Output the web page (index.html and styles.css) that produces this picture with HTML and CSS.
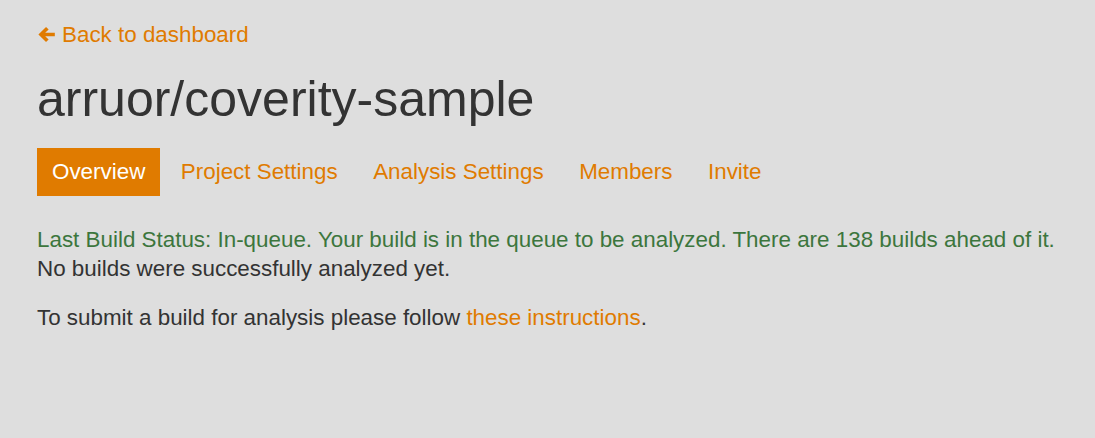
FILE: index.html
```html
<!DOCTYPE html>
<html>
<head>
<meta charset="utf-8">
<link rel="stylesheet" href="styles.css">
</head>
<body>
<div class="page">
  <a class="back" href="#"><svg class="arrow" viewBox="0 0 16 16" width="19" height="19"><path d="M1.2 8 L7.6 1.6 L9.8 3.8 L6.9 6.5 H15 V9.5 H6.9 L9.8 12.2 L7.6 14.4 Z" fill="currentColor"/></svg>Back to dashboard</a>
  <h1 class="title">arruor/coverity-sample</h1>
  <ul class="nav">
    <li class="nav-item active"><a href="#">Overview</a></li>
    <li class="nav-item"><a href="#">Project Settings</a></li>
    <li class="nav-item"><a href="#">Analysis Settings</a></li>
    <li class="nav-item"><a href="#">Members</a></li>
    <li class="nav-item"><a href="#">Invite</a></li>
  </ul>
  <div class="status">
    <p class="success">Last Build Status: In-queue. Your build is in the queue to be analyzed. There are 138 builds ahead of it.</p>
    <p class="plain">No builds were successfully analyzed yet.</p>
  </div>
  <p class="plain submit">To submit a build for analysis please follow <a href="#">these instructions</a>.</p>
</div>
</body>
</html>
```
FILE: styles.css
```css
html, body {
  margin: 0;
  padding: 0;
  background: #dedede;
}
body {
  font-family: "Liberation Sans", Arial, sans-serif;
  font-size: 22.4px;
  line-height: 29px;
  color: #333;
}
a {
  color: #e07b00;
  text-decoration: none;
}
.page {
  padding: 20px 37px 0 37px;
}
.back {
  display: inline-flex;
  align-items: center;
  gap: 6px;
}
.arrow {
  display: block;
}
.title {
  font-size: 50px;
  font-weight: normal;
  line-height: 56px;
  margin: 20px 0 21px;
}
.nav {
  list-style: none;
  margin: 0;
  padding: 0;
  display: flex;
  gap: 5.5px;
}
.nav-item a {
  display: block;
  padding: 10px 15px;
  line-height: 28px;
}
.nav-item.active a {
  background: #e07b00;
  color: #fff;
}
.status {
  margin-top: 29px;
}
.status p {
  margin: 0;
}
.success {
  color: #3c763d;
}
.submit {
  margin: 20px 0 0;
}
```
